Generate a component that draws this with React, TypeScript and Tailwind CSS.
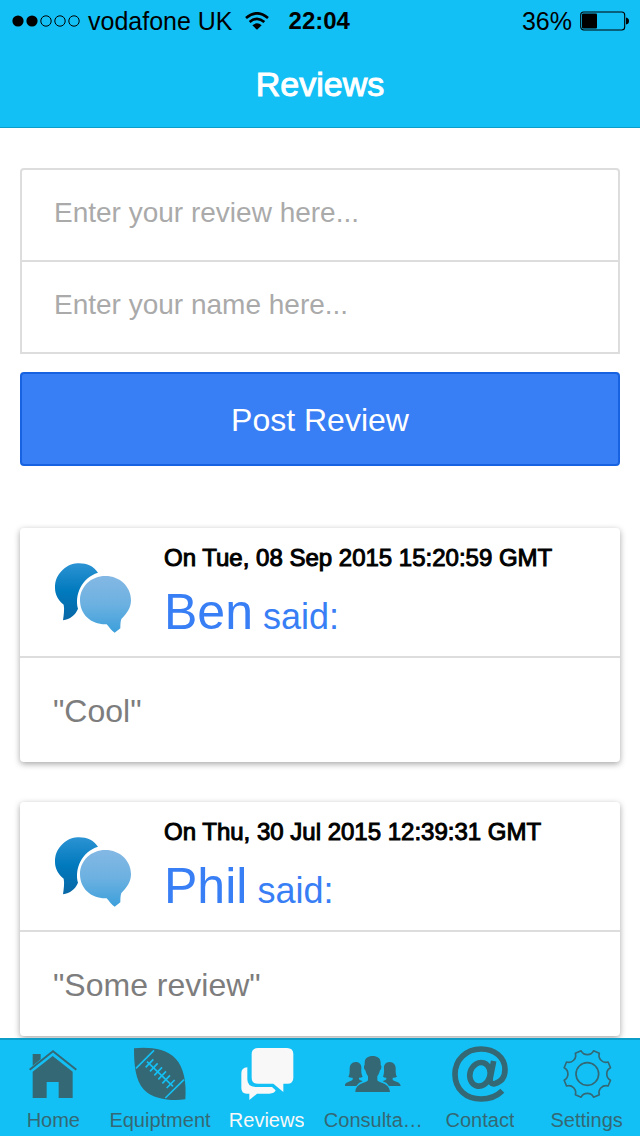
import type { ReactNode } from "react";

type Review = { name: string; date: string; text: string };

const reviews: Review[] = [
  { name: "Ben", date: "Tue, 08 Sep 2015 15:20:59 GMT", text: "Cool" },
  { name: "Phil", date: "Thu, 30 Jul 2015 12:39:31 GMT", text: "Some review" },
];

function StatusBar() {
  return (
    <div className="flex h-10 items-center justify-between pt-px pr-2.5 pl-3 text-[25px] leading-10 text-black">
      <div className="flex items-center">
        <svg className="h-3 w-[68px]" viewBox="0 0 68 12" aria-hidden="true">
          <circle cx="6" cy="6" r="5.6" />
          <circle cx="20" cy="6" r="5.6" />
          <g fill="none" stroke="black" strokeWidth="1">
            <circle cx="34" cy="6" r="5.2" />
            <circle cx="48" cy="6" r="5.2" />
            <circle cx="62" cy="6" r="5.2" />
          </g>
        </svg>
        <span className="ml-2">vodafone UK</span>
        <svg className="ml-3 h-[18px] w-6" viewBox="0 0 72 54" aria-hidden="true">
          <g fill="none" stroke="black" strokeWidth="8">
            <path d="M3 18 Q36 -10 69 18" />
            <path d="M14 30 Q36 11 58 30" />
          </g>
          <path d="M22 40 Q36 28 50 40 L36 53Z" />
        </svg>
        <span className="ml-5 text-2xl leading-10 font-bold">22:04</span>
      </div>
      <div className="flex items-center gap-2">
        <span>36%</span>
        <svg className="h-5 w-[50px]" viewBox="0 0 50 20" aria-hidden="true">
          <rect x="0.7" y="1" width="44" height="18" rx="3" fill="none" stroke="black" strokeWidth="1.1" />
          <rect x="2" y="2.5" width="15" height="15" rx="1" />
          <path d="M46 6.5 Q49 7 49 10 Q49 13 46 13.5Z" />
        </svg>
      </div>
    </div>
  );
}

function ChatAvatar() {
  return (
    <svg className="h-[70px] w-[76px]" viewBox="135 129 228 210" aria-hidden="true">
      <defs>
        <linearGradient id="back" x1="0" y1="0" x2="0" y2="1">
          <stop offset="0" stopColor="#2b93d3" />
          <stop offset="0.5" stopColor="#0079bd" />
          <stop offset="1" stopColor="#0967a5" />
        </linearGradient>
        <linearGradient id="front" x1="0" y1="0" x2="0" y2="1">
          <stop offset="0" stopColor="#84b8e4" />
          <stop offset="0.5" stopColor="#6cb1e1" />
          <stop offset="1" stopColor="#3c9fdb" />
        </linearGradient>
      </defs>
      <path
        fill="url(#back)"
        d="M264 158C250 138 230 129 203 130C181 131 166 141 154 154C139 171 135 185 135 203C135 225 145 240 161 254C164 268 161 285 159 301C180 297 196 286 204 266C193 225 215 173 264 158Z"
      />
      <path
        fill="url(#front)"
        d="M286 168C330 168 363 200 363 241C363 262 352 280 334 297C331 306 331 316 331 325L314 338C305 333 298 322 290 313C245 315 210 285 210 241C210 200 243 168 286 168Z"
      />
    </svg>
  );
}

function ReviewCard({ name, date, text }: Review) {
  return (
    <article className="rounded-[4px] bg-white shadow-[0_2px_6px_rgba(0,0,0,0.35)]">
      <header className="flex h-[130px] items-center border-b-2 border-[#dddddd] pr-5 pl-[35px]">
        <div className="pt-3">
          <ChatAvatar />
        </div>
        <div className="ml-[33px] min-w-0 flex-1 pt-1">
          <p className="text-2xl leading-8 text-black [-webkit-text-stroke:1px_black]">On {date}</p>
          <h2 className="mt-1 text-[50px] leading-[68px] text-[#387ef5]">
            {name}
            <span className="text-4xl"> said:</span>
          </h2>
        </div>
      </header>
      <p className="px-[33px] pt-[33px] pb-[31px] text-[32px] leading-10 text-[#7d7d7d]">"{text}"</p>
    </article>
  );
}

function TextField({ label, placeholder }: { label: string; placeholder: string }) {
  return (
    <div>
      <input
        aria-label={label}
        className="block h-[90px] w-full px-8 pb-1 text-[28px] text-black outline-none placeholder:text-[#aaaaaa]"
        placeholder={placeholder}
      />
    </div>
  );
}

function HomeIcon() {
  return (
    <svg className="size-14" viewBox="76 48 168 168" fill="currentColor" aria-hidden="true">
      <path d="M90 119L160 64L230 119" fill="none" stroke="currentColor" strokeWidth="6" />
      <path d="M99 72H123V88L99 107Z" />
      <path d="M99 125L159 78L219 125V204H177V156H141V204H99Z" />
    </svg>
  );
}

function FootballIcon() {
  return (
    <svg className="size-14" viewBox="396 48 168 168" fill="currentColor" aria-hidden="true">
      <path d="M402 55C442 50 498 54 527 86C552 112 560 160 556 208C518 213 462 210 432 179C406 152 402 105 402 55Z" />
      <g className="stroke-[#13c0f5]" strokeWidth="5" fill="none">
        <path d="M408 115L462 61M496 204L552 149" />
        <path d="M441 95L519 169" />
        <path d="M437 112L460 88M450 124L473 100M463 136L486 112M475 148L498 124M487 160L510 136M500 174L524 150" />
      </g>
    </svg>
  );
}

function BubblesIcon() {
  return (
    <svg className="size-14" viewBox="77 48 168 168" fill="currentColor" aria-hidden="true">
      <path d="M134 54H221Q240 54 240 72V143Q240 161 222 161H210V186L180 161H134Q115 161 115 143V72Q115 54 134 54Z" />
      <path d="M102 112Q84 113 84 130V174Q84 191 100 191H108V210L131 191H168Q183 191 187 181L176 171H126Q102 170 102 148Z" />
    </svg>
  );
}

function PeopleIcon() {
  return (
    <svg className="size-14" viewBox="397 48 168 168" fill="currentColor" aria-hidden="true">
      <path d="M480 78C494 78 504 84 504 99C504 105 504 106 506 108C507 115 504 120 502 121C500 130 496 136 494 139V151C500 160 530 158 532 186H428C430 158 460 160 466 151V139C464 136 460 130 458 121C456 120 453 115 454 108C456 106 456 105 456 99C456 84 466 78 480 78Z" />
      <path d="M429 96C442 96 447 105 446 116C445 127 447 134 450 140Q444 144 439 143V148C443 152 447 152 450 154Q437 158 431 168H396C397 154 415 155 420 149V143Q413 144 407 140C411 134 411 127 411 116C411 105 417 96 429 96Z" />
      <path d="M531 96C518 96 513 105 514 116C515 127 513 134 511 140Q516 144 521 143V148C517 152 513 152 510 154Q523 158 529 168H564C563 154 545 155 540 149V143Q547 144 553 140C549 134 549 127 549 116C549 105 543 96 531 96Z" />
    </svg>
  );
}

function ContactIcon() {
  return (
    <svg className="size-14" viewBox="78 48 168 168" fill="none" stroke="currentColor" strokeWidth="17" aria-hidden="true">
      <path d="M203 93L193 143Q190 164 206 161C226 156 237 140 237 118C237 82 205 57 165 57C120 57 87 90 87 133C87 178 120 207 165 207C192 207 213 198 229 182" />
      <ellipse cx="162" cy="133" rx="30" ry="36" transform="rotate(18 162 133)" />
    </svg>
  );
}

function gearPath(cx: number, cy: number, r: number) {
  const point = (deg: number) => {
    const a = (deg * Math.PI) / 180;
    return `${(cx + r * Math.sin(a)).toFixed(1)} ${(cy - r * Math.cos(a)).toFixed(1)}`;
  };
  let d = "";
  for (let k = 0; k < 8; k++) {
    d += `${k ? "L" : "M"}${point(k * 45 - 15)}A21 21 0 0 0 ${point(k * 45 + 15)}`;
  }
  return d + "Z";
}

function GearIcon() {
  return (
    <svg className="size-14" viewBox="398 48 168 168" fill="none" stroke="currentColor" strokeWidth="5" aria-hidden="true">
      <path d={gearPath(483, 132, 72)} strokeLinejoin="round" />
      <circle cx="483" cy="132" r="34" />
    </svg>
  );
}

const tabs: { label: string; icon: ReactNode; active?: boolean }[] = [
  { label: "Home", icon: <HomeIcon /> },
  { label: "Equiptment", icon: <FootballIcon /> },
  { label: "Reviews", icon: <BubblesIcon />, active: true },
  { label: "Consulta…", icon: <PeopleIcon /> },
  { label: "Contact", icon: <ContactIcon /> },
  { label: "Settings", icon: <GearIcon /> },
];

export default function App() {
  return (
    <div className="flex h-screen flex-col bg-white font-['Liberation_Sans',Arial,sans-serif]">
      <header className="shrink-0 border-b border-[#0d9dc9] bg-[#13c0f5]">
        <StatusBar />
        <h1 className="pt-px text-center text-[34px] leading-[86px] text-white [-webkit-text-stroke:1px_white]">Reviews</h1>
      </header>

      <main className="min-h-0 flex-1 overflow-y-auto px-5 pt-10 [scrollbar-width:none]">
        <form onSubmit={(e) => e.preventDefault()}>
          <div className="divide-y-2 divide-[#dddddd] rounded-t-[4px] border-2 border-[#dddddd]">
            <TextField label="Review" placeholder="Enter your review here..." />
            <TextField label="Name" placeholder="Enter your name here..." />
          </div>
          <button
            type="submit"
            className="mt-[18px] block w-full rounded-[4px] border-2 border-[#1762e0] bg-[#387ef5] pt-0.5 text-[32px] leading-[88px] text-white"
          >
            Post Review
          </button>
        </form>

        <section className="mt-[62px] flex flex-col gap-10" aria-label="Reviews">
          {reviews.map((r) => (
            <ReviewCard key={r.name} {...r} />
          ))}
        </section>
      </main>

      <nav className="grid shrink-0 grid-cols-6 border-t-2 border-[#0d9dc9] bg-[#13c0f5]">
        {tabs.map((t) => (
          <a
            key={t.label}
            href="#"
            aria-current={t.active ? "page" : undefined}
            className={
              t.active
                ? "flex h-24 min-w-0 flex-col items-center pt-1.5 text-[#f8f8f8]"
                : "flex h-24 min-w-0 flex-col items-center pt-1.5 text-[#346874]"
            }
          >
            {t.icon}
            <span className="mt-1 max-w-full truncate text-xl leading-7">{t.label}</span>
          </a>
        ))}
      </nav>
    </div>
  );
}
